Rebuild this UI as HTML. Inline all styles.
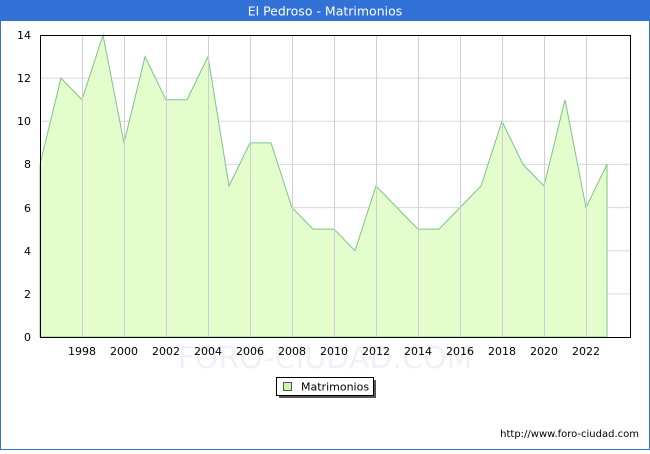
<!DOCTYPE html>
<html><head><meta charset="utf-8"><style>
body{margin:0;width:650px;height:450px;overflow:hidden;font-family:"DejaVu Sans","Liberation Sans",sans-serif;background:#fff}
</style></head><body>
<svg width="650" height="450" xmlns="http://www.w3.org/2000/svg" font-family="DejaVu Sans, Liberation Sans, sans-serif">
<rect x="0.5" y="0.5" width="649" height="449" fill="#fff" stroke="#3272d6"/>
<rect x="0" y="0" width="650" height="21" fill="#3272d6"/>
<text x="325" y="15.5" fill="#fff" font-size="12.5" text-anchor="middle">El Pedroso - Matrimonios</text>
<g stroke="#d8d8d8" stroke-width="1">
<line x1="40" y1="293.9" x2="630" y2="293.9"/><line x1="40" y1="250.7" x2="630" y2="250.7"/>
<line x1="40" y1="207.6" x2="630" y2="207.6"/><line x1="40" y1="164.4" x2="630" y2="164.4"/>
<line x1="40" y1="121.3" x2="630" y2="121.3"/><line x1="40" y1="78.1" x2="630" y2="78.1"/>
</g>
<polygon fill="#e4fdcd" stroke="#7cc48a" stroke-width="1" points="40,337 40,164.4 61,78.1 82,99.7 103,35 124,142.9 145,56.6 166,99.7 187,99.7 208,56.6 229,186 250,142.9 271,142.9 292,207.6 313,229.1 334,229.1 355,250.7 376,186 397,207.6 418,229.1 439,229.1 460,207.6 481,186 502,121.3 523,164.4 544,186 565,99.7 586,207.6 607,164.4 607,337"/>
<g stroke="#cfcfcf" stroke-width="1">
<line x1="82.5" y1="35" x2="82.5" y2="337"/><line x1="124.5" y1="35" x2="124.5" y2="337"/><line x1="166.5" y1="35" x2="166.5" y2="337"/><line x1="208.5" y1="35" x2="208.5" y2="337"/><line x1="250.5" y1="35" x2="250.5" y2="337"/><line x1="292.5" y1="35" x2="292.5" y2="337"/><line x1="334.5" y1="35" x2="334.5" y2="337"/><line x1="376.5" y1="35" x2="376.5" y2="337"/><line x1="418.5" y1="35" x2="418.5" y2="337"/><line x1="460.5" y1="35" x2="460.5" y2="337"/><line x1="502.5" y1="35" x2="502.5" y2="337"/><line x1="544.5" y1="35" x2="544.5" y2="337"/><line x1="586.5" y1="35" x2="586.5" y2="337"/>
</g>
<rect x="40.5" y="35.5" width="590" height="302" fill="none" stroke="#000"/>
<text x="325" y="368" font-size="30" fill="#f0f0f8" text-anchor="middle">FORO-CIUDAD.COM</text>
<g font-size="11" fill="#000" text-anchor="end">
<text x="31" y="341">0</text><text x="31" y="298">2</text><text x="31" y="255">4</text><text x="31" y="212">6</text><text x="31" y="168">8</text><text x="31" y="125">10</text><text x="31" y="82">12</text><text x="31" y="39">14</text>
</g>
<g font-size="11" fill="#000" text-anchor="middle">
<text x="82" y="355">1998</text><text x="124" y="355">2000</text><text x="166" y="355">2002</text><text x="208" y="355">2004</text><text x="250" y="355">2006</text><text x="292" y="355">2008</text><text x="334" y="355">2010</text><text x="376" y="355">2012</text><text x="418" y="355">2014</text><text x="460" y="355">2016</text><text x="502" y="355">2018</text><text x="544" y="355">2020</text><text x="586" y="355">2022</text>
</g>
<rect x="279" y="380" width="97" height="18" fill="#555"/>
<rect x="276.5" y="377.5" width="97" height="18" fill="#fff" stroke="#000"/>
<rect x="283.5" y="382.5" width="8" height="8" fill="#ccf5a8" stroke="#555"/>
<text x="301" y="390.5" font-size="11" fill="#000">Matrimonios</text>
<text x="639" y="437" font-size="10" fill="#000" text-anchor="end">http://www.foro-ciudad.com</text>
</svg>
</body></html>
